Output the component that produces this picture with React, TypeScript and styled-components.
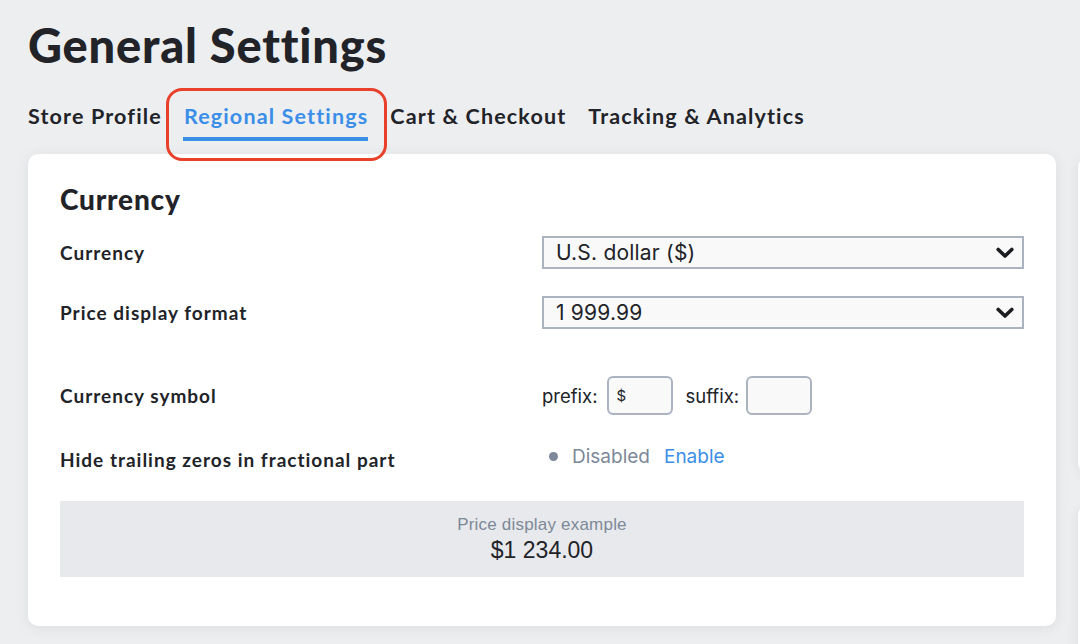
import React from 'react';
import styled, { createGlobalStyle } from 'styled-components';

const Global = createGlobalStyle`
  html, body { margin: 0; padding: 0; background: #edeef0; }
  body {
    width: 1080px; height: 644px; overflow: hidden;
    font-family: Lato, "Noto Sans", sans-serif; color: #212328;
  }
  * { box-sizing: border-box; }
`;

const Page = styled.div`
  width: 1080px;
  height: 644px;
  overflow: hidden;
  padding: 19px 0 0 28px;
`;

const Title = styled.h1`
  margin: 0;
  font-family: Lato, sans-serif;
  font-weight: 900;
  font-size: 47px;
  line-height: 52px;
  color: #212328;
  letter-spacing: 0.8px;
`;

const Tabs = styled.nav`
  display: flex;
  gap: 22px;
  margin-top: 33px;
`;

const Tab = styled.div<{ $active?: boolean }>`
  position: relative;
  font-family: Lato, sans-serif;
  font-weight: 700;
  font-size: 21.5px;
  line-height: 24px;
  padding-bottom: 14px;
  letter-spacing: 1.15px;
  white-space: nowrap;
  color: ${p => (p.$active ? '#3b8ee8' : '#212328')};
  &::after {
    content: '';
    display: ${p => (p.$active ? 'block' : 'none')};
    position: absolute;
    left: -1px; right: 0; bottom: 1px;
    height: 4px;
    background: #3b8ee8;
  }
`;

const Highlight = styled.span`
  position: absolute;
  left: -18px; right: -19px; top: -16px; bottom: -19px;
  border: 3px solid #e8402a;
  border-radius: 16px;
  pointer-events: none;
`;

const CardRow = styled.div`
  display: flex;
  gap: 22px;
  margin-top: 12px;
  align-items: flex-start;
`;

const Card = styled.section`
  flex: 0 0 1028px;
  background: #fff;
  border-radius: 10px;
  box-shadow: 0 2px 14px rgba(0, 0, 0, 0.07);
  padding: 30px 32px 49px;
`;

const Side = styled.div`
  display: flex;
  flex-direction: column;
  gap: 32px;
  padding-top: 3px;
`;

const SideCard = styled.div<{ $h: number }>`
  width: 300px;
  height: ${p => p.$h}px;
  background: #fff;
  border-radius: 10px;
  box-shadow: 0 2px 14px rgba(0, 0, 0, 0.07);
`;

const SectionTitle = styled.h2`
  margin: 0;
  font-family: Lato, sans-serif;
  font-weight: 900;
  font-size: 28px;
  line-height: 30px;
  color: #212328;
  letter-spacing: 0.8px;
`;

const Row = styled.div<{ $top: number; $h: number }>`
  display: grid;
  grid-template-columns: 482px 482px;
  align-items: center;
  margin-top: ${p => p.$top}px;
  min-height: ${p => p.$h}px;
`;

const Label = styled.div`
  font-family: Lato, sans-serif;
  font-weight: 700;
  font-size: 19px;
  letter-spacing: 1px;
  color: #212328;
`;

const SelectBox = styled.div`
  display: flex;
  align-items: center;
  justify-content: space-between;
  height: 33px;
  padding: 0 8px 0 12px;
  border: 2px solid #aab3bf;
  background: #f9f9f9;
  font-family: Inter, "Liberation Sans", sans-serif;
  font-size: 21px;
  letter-spacing: 0.2px;
  color: #212328;
`;

const Inline = styled.div<{ $lift?: number }>`
  display: flex;
  align-items: center;
  margin-top: ${p => -(p.$lift ?? 0)}px;
  font-family: Inter, "Liberation Sans", sans-serif;
  font-size: 18.5px;
  color: #212328;
`;

const FieldText = styled.span<{ $ml?: number }>`
  margin-left: ${p => p.$ml ?? 0}px;
`;

const SmallInput = styled.div<{ $ml?: number }>`
  width: 66px;
  height: 39px;
  margin-left: ${p => p.$ml ?? 0}px;
  border: 2px solid #aab3bf;
  border-radius: 6px;
  background: #f9f9f9;
  display: flex;
  align-items: center;
  padding-left: 8px;
  font-size: 15px;
  color: #212328;
`;

const Dot = styled.span`
  width: 9px; height: 9px;
  border-radius: 50%;
  background: #7d8898;
  margin: 0 14px 0 7px;
`;

const Muted = styled.span`
  color: #7d8898;
  font-size: 19px;
`;

const Link = styled.span`
  color: #3b8ee8;
  font-size: 19px;
  margin-left: 14px;
`;

const Example = styled.div`
  margin-top: 22px;
  height: 76px;
  background: #e8e9ec;
  display: flex;
  flex-direction: column;
  align-items: center;
  justify-content: center;
  font-family: "Liberation Sans", Inter, sans-serif;
`;

const ExampleCaption = styled.div`
  font-size: 17px;
  letter-spacing: 0.2px;
  color: #7d8898;
  line-height: 20px;
`;

const ExampleValue = styled.div`
  font-size: 23px;
  color: #212328;
  line-height: 26px;
  margin-top: 2px;
`;

const Chevron = () => (
  <svg width="18" height="12" viewBox="0 0 18 12">
    <path d="M2.2 2.5 L9 9 L15.8 2.5" fill="none" stroke="#1c1d21" strokeWidth="3.6" strokeLinecap="round" strokeLinejoin="round" />
  </svg>
);

export default function App() {
  return (
    <>
      <Global />
      <Page>
        <Title>General Settings</Title>
        <Tabs>
          <Tab>Store Profile</Tab>
          <Tab $active>
            Regional Settings
            <Highlight />
          </Tab>
          <Tab>Cart &amp; Checkout</Tab>
          <Tab>Tracking &amp; Analytics</Tab>
        </Tabs>
        <CardRow>
          <Card>
            <SectionTitle>Currency</SectionTitle>
            <Row $top={22} $h={33}>
              <Label>Currency</Label>
              <SelectBox>
                <span>U.S. dollar ($)</span>
                <Chevron />
              </SelectBox>
            </Row>
            <Row $top={27} $h={33}>
              <Label>Price display format</Label>
              <SelectBox>
                <span>1 999.99</span>
                <Chevron />
              </SelectBox>
            </Row>
            <Row $top={47} $h={39}>
              <Label>Currency symbol</Label>
              <Inline>
                <FieldText>prefix:</FieldText>
                <SmallInput $ml={9}>$</SmallInput>
                <FieldText $ml={13}>suffix:</FieldText>
                <SmallInput $ml={7} />
              </Inline>
            </Row>
            <Row $top={24} $h={40}>
              <Label>Hide trailing zeros in fractional part</Label>
              <Inline $lift={5}>
                <Dot />
                <Muted>Disabled</Muted>
                <Link>Enable</Link>
              </Inline>
            </Row>
            <Example>
              <ExampleCaption>Price display example</ExampleCaption>
              <ExampleValue>$1 234.00</ExampleValue>
            </Example>
          </Card>
          <Side>
            <SideCard $h={316} />
            <SideCard $h={200} />
          </Side>
        </CardRow>
      </Page>
    </>
  );
}
